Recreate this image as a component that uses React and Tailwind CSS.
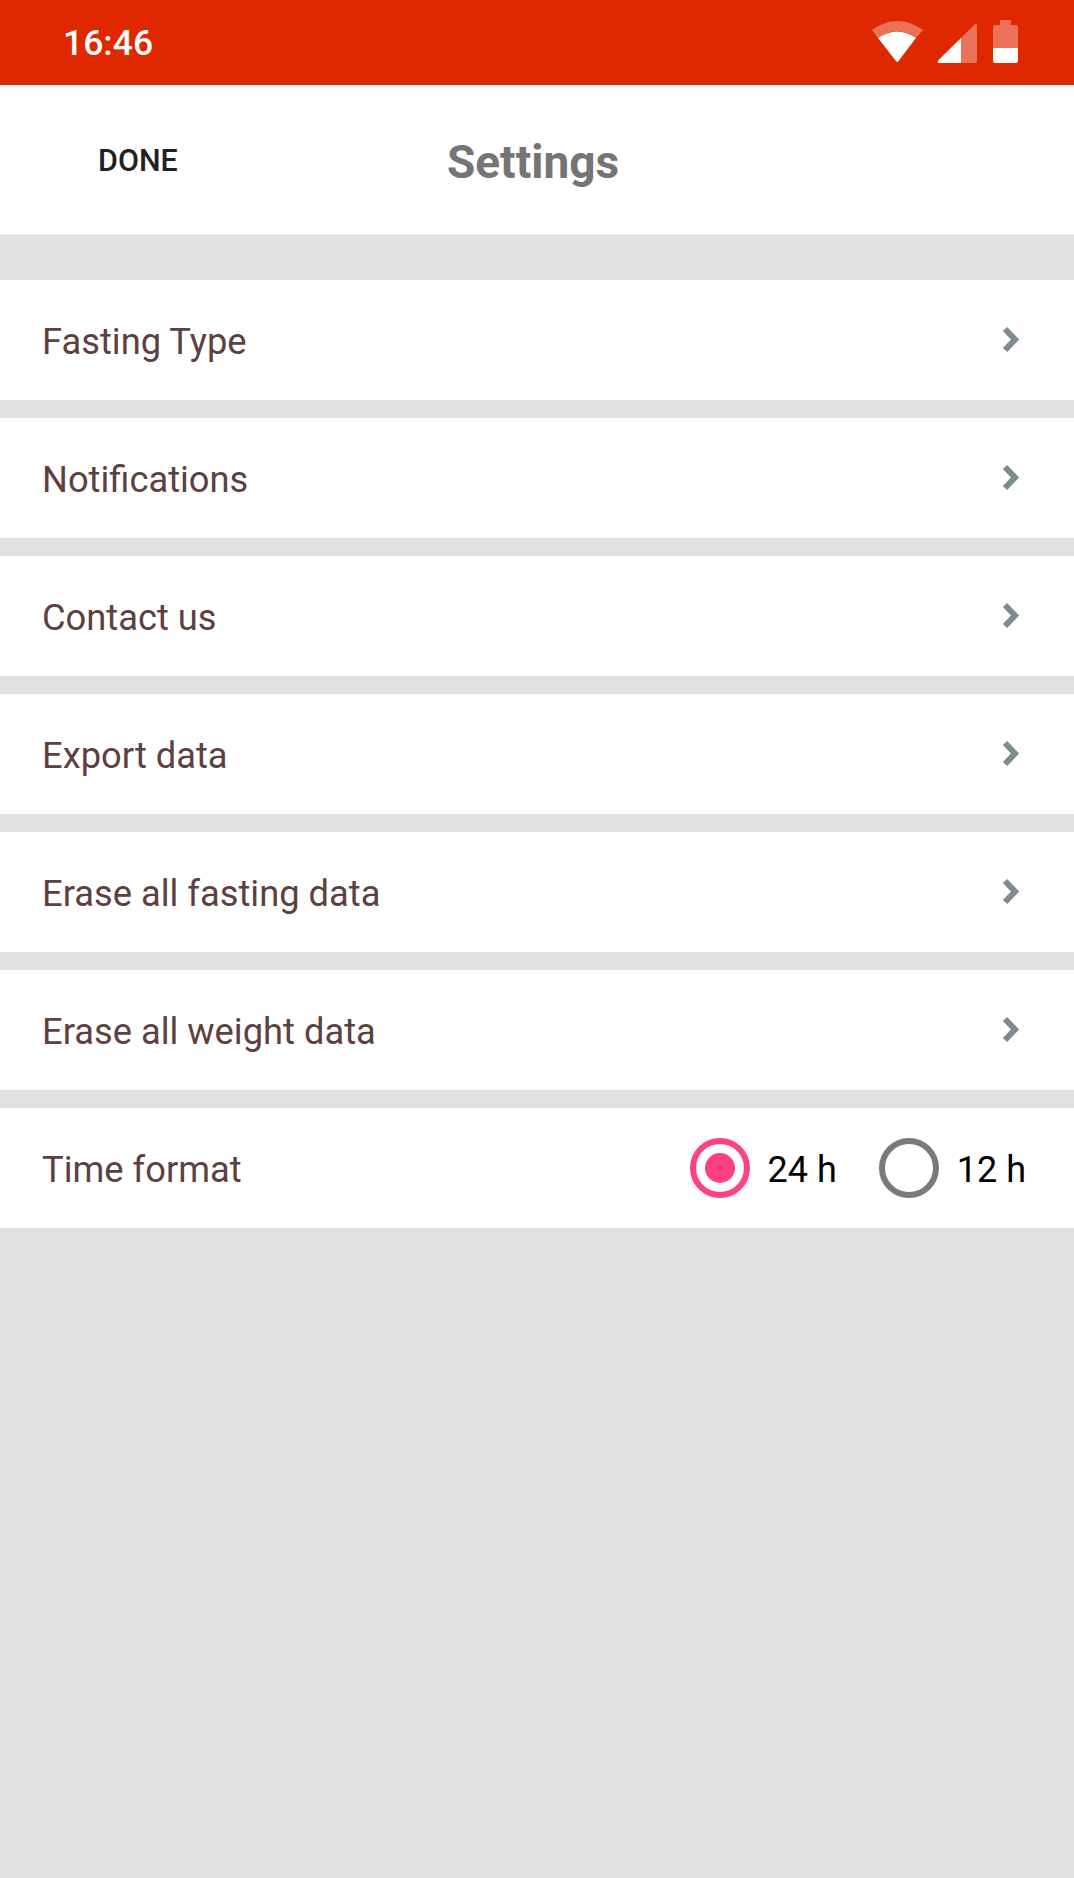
const items = ["Fasting Type", "Notifications", "Contact us", "Export data", "Erase all fasting data", "Erase all weight data"];

function Chevron() {
  return (
    <svg width="20" height="30" viewBox="0 0 20 30" className="mr-[3px]">
      <path d="M4 4 L14 14.5 L4 25" fill="none" stroke="#7b8d8e" strokeWidth="6" />
    </svg>
  );
}

function Row({ children }) {
  return <div className="h-[120px] bg-white flex items-center justify-between pl-[42px] pr-[50px] text-[36.3px] text-[#5d4040]">{children}</div>;
}

export default function App() {
  return (
    <div className="w-[1074px] h-[1878px] bg-[#e2e1e0] flex flex-col overflow-hidden" style={{ fontFamily: "Roboto, sans-serif" }}>
      <div className="h-[85px] bg-[#df2700] flex items-center justify-between pl-[63px] pr-[54px] shrink-0">
        <span className="text-white text-[35.5px] font-medium leading-none mt-[3px]">16:46</span>
        <svg width="150" height="48" viewBox="0 0 150 48">
          <path d="M2 11 Q27.5 -7 53 11 L46 19 Q27 5 8 19 Z" fill="#fff" fillOpacity="0.35" />
          <path d="M8 19 Q27 6 46 19 L28.5 42 Q27.5 44 26 42 Z" fill="#fff" />
          <path d="M68 44 Q67 42.5 68.5 41 L91 19 V44 Z" fill="#fff" />
          <path d="M91 19 L105 5 Q107 4 107 6 V42 Q107 44 105 44 H91 Z" fill="#fff" fillOpacity="0.35" />
          <path d="M123 29 V8 Q123 6 125 6 H130 V1 H141 V6 H146 Q148 6 148 8 V29 Z" fill="#fff" fillOpacity="0.35" />
          <path d="M123 29 H148 V42 Q148 44 146 44 H125 Q123 44 123 42 Z" fill="#fff" />
        </svg>
      </div>
      <div className="h-[150px] bg-white flex items-center relative shrink-0 border-b border-[#eeeeee]">
        <span className="ml-[98px] mt-[2px] text-[#212121] text-[30.5px] font-medium">DONE</span>
        <span className="absolute left-0 right-[8px] top-[42px] text-center text-[#757575] text-[46px] font-bold leading-[70px]">Settings</span>
      </div>
      <div className="flex flex-col gap-[18px] mt-[45px]">
        {items.map((t) => (
          <Row key={t}>
            <span className="mt-[4px]">{t}</span>
            <Chevron />
          </Row>
        ))}
        <div className="h-[120px] bg-white flex items-center justify-between pl-[42px] pr-[48px] text-[36.3px]">
          <span className="text-[#5d4040] mt-[4px]">Time format</span>
          <div className="flex items-center text-black">
            <div className="w-[60px] h-[60px] rounded-full border-[6px] border-[#ff4081] flex items-center justify-center">
              <div className="w-[30px] h-[30px] rounded-full bg-[#ff4081]" />
            </div>
            <span className="ml-[18px] mr-[42px] mt-[4px] text-[36px]">24 h</span>
            <div className="w-[60px] h-[60px] rounded-full border-[6px] border-[#7a7a7a]" />
            <span className="ml-[18px] mt-[4px] text-[36px]">12 h</span>
          </div>
        </div>
      </div>
    </div>
  );
}
